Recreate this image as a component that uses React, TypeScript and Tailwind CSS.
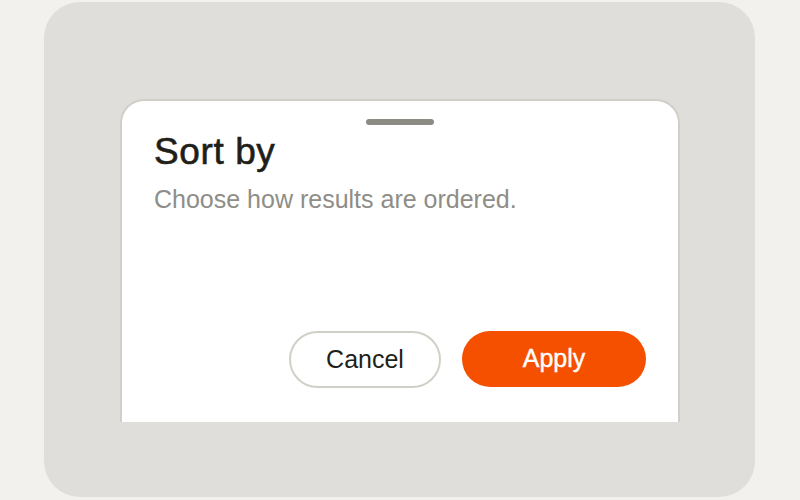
export default function App() {
  return (
    <div
      className="h-[500px] w-[800px] bg-[#f2f1ed] pt-[2px] pl-[44px]"
      style={{ fontFamily: '"Liberation Sans", Arial, sans-serif' }}
    >
      <div className="flex h-[495px] w-[711px] flex-col rounded-[36px] bg-[#dfdeda] pt-[97px] pl-[76px]">
        <div className="flex h-[323px] w-[560px] flex-col rounded-t-[24px] border-2 border-b-0 border-[#d1d0c8] bg-white px-[32px] pb-[34px] pt-[18px]">
          <div className="mx-auto h-[6px] w-[68px] rounded-full bg-[#8b8b84]" />
          <h2 className="mt-[5px] text-[37px] leading-[1.2] tracking-[0.6px] text-[#1f1f1a] [-webkit-text-stroke:0.6px_#1f1f1a]">
            Sort by
          </h2>
          <p className="mt-[10px] text-[25px] leading-[1.2] text-[#8e8d87]">Choose how results are ordered.</p>
          <div className="flex-1" />
          <div className="flex justify-end gap-[21px]">
            <button className="h-[57px] w-[152px] rounded-full border-2 border-[#d1d0c8] bg-white text-[25px] text-[#1f1f1a]">
              Cancel
            </button>
            <button className="h-[56px] w-[184px] rounded-full bg-[#f55000] text-[25px] text-white [-webkit-text-stroke:0.4px_#ffffff]">
              Apply
            </button>
          </div>
        </div>
      </div>
    </div>
  );
}
